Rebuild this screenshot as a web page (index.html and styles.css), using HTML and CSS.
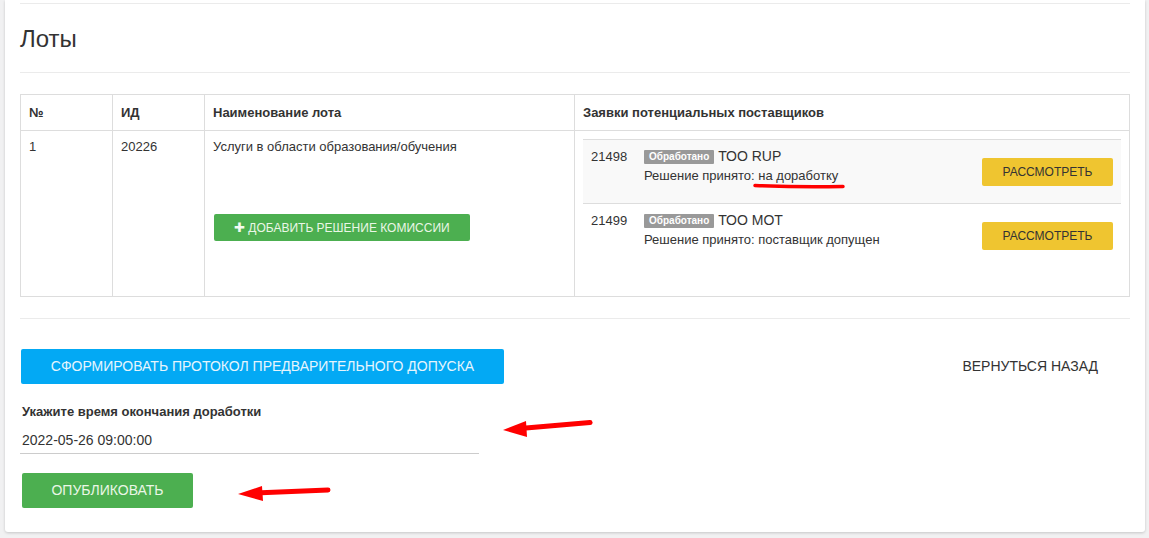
FILE: index.html
```html
<!DOCTYPE html>
<html lang="ru">
<head>
<meta charset="utf-8">
<link rel="stylesheet" href="styles.css">
</head>
<body>
<div class="card">
  <hr class="rule rule-top">
  <h3 class="title">Лоты</h3>
  <hr class="rule rule-title">
  <table class="lots">
    <thead>
      <tr>
        <th class="c-num">№</th>
        <th class="c-id">ИД</th>
        <th class="c-name">Наименование лота</th>
        <th class="c-bids">Заявки потенциальных поставщиков</th>
      </tr>
    </thead>
    <tbody>
      <tr>
        <td>1</td>
        <td>20226</td>
        <td>
          <div class="lot-name">Услуги в области образования/обучения</div>
          <button class="btn btn-green btn-sm"><span class="plus">✚</span>ДОБАВИТЬ РЕШЕНИЕ КОМИССИИ</button>
        </td>
        <td class="bids-cell">
          <table class="bids">
            <tr class="striped">
              <td class="b-id">21498</td>
              <td class="b-info">
                <div><span class="badge">Обработано</span> ТОО RUP</div>
                <div>Решение принято: на доработку</div>
              </td>
              <td class="b-act"><button class="btn btn-yellow">РАССМОТРЕТЬ</button></td>
            </tr>
            <tr>
              <td class="b-id">21499</td>
              <td class="b-info">
                <div><span class="badge">Обработано</span> ТОО МОТ</div>
                <div>Решение принято: поставщик допущен</div>
              </td>
              <td class="b-act"><button class="btn btn-yellow">РАССМОТРЕТЬ</button></td>
            </tr>
          </table>
        </td>
      </tr>
    </tbody>
  </table>
  <hr class="rule rule-bottom">
  <div class="actions">
    <button class="btn btn-blue">СФОРМИРОВАТЬ ПРОТОКОЛ ПРЕДВАРИТЕЛЬНОГО ДОПУСКА</button>
    <a class="back">ВЕРНУТЬСЯ НАЗАД</a>
  </div>
  <div class="field">
    <label class="field-label">Укажите время окончания доработки</label>
    <div class="field-input">2022-05-26 09:00:00</div>
  </div>
  <button class="btn btn-green btn-publish">ОПУБЛИКОВАТЬ</button>
</div>
<svg class="marks" width="1149" height="538" viewBox="0 0 1149 538">
  <path d="M755 185.5 Q800 187.5 843 186.5" stroke="#ff0000" stroke-width="3.5" fill="none" stroke-linecap="round"/>
  <line x1="590" y1="422.5" x2="520" y2="428.5" stroke="#ff0000" stroke-width="5" stroke-linecap="round"/>
  <polygon points="503,430 526,421 527,437" fill="#ff0000"/>
  <line x1="328" y1="490" x2="255" y2="493" stroke="#ff0000" stroke-width="5" stroke-linecap="round"/>
  <polygon points="238,494 262,486 263,501" fill="#ff0000"/>
</svg>
</body>
</html>
```
FILE: styles.css
```css
* { box-sizing: border-box; }
html, body { margin: 0; padding: 0; }
body {
  background: #f1f1f2;
  font-family: "Liberation Sans", Arial, sans-serif;
  font-size: 13px;
  color: #333;
  width: 1149px;
  height: 538px;
  overflow: hidden;
  position: relative;
}
.card {
  margin-left: 5px;
  width: 1140px;
  height: 532px;
  background: #fff;
  padding: 3px 15px 0 15px;
  box-shadow: 0 1px 3px rgba(0,0,0,0.18);
  border-radius: 0 0 3px 3px;
}
.rule { border: 0; border-top: 1px solid #ebebeb; margin: 0; height: 0; }
.title {
  margin: 22px 0 0 0;
  font-size: 24px;
  font-weight: normal;
  line-height: 26px;
  color: #333;
}
.rule-title { margin-top: 20px; }
.lots {
  margin-top: 21px;
  width: 1110px;
  border-collapse: collapse;
  table-layout: fixed;
}
.lots > thead > tr > th,
.lots > tbody > tr > td {
  border: 1px solid #ddd;
  padding: 8px;
  vertical-align: top;
  text-align: left;
}
.lots th { font-weight: bold; line-height: 19px; }
.lots > tbody > tr > td { line-height: 18px; padding-top: 7px; }
.c-num { width: 92px; }
.c-id { width: 92px; }
.c-name { width: 370px; }
.lot-name { margin-bottom: 58px; }
.btn {
  display: inline-block;
  border: 0;
  border-radius: 2px;
  font-family: "Liberation Sans", Arial, sans-serif;
  cursor: pointer;
}
.btn-green { background: #4caf50; color: #eaf6e6; }
.btn-sm {
  height: 27px;
  width: 256px;
  font-size: 12px;
  padding: 0;
  line-height: 27px;
  margin-left: 1px;
}
.plus { font-size: 13px; margin-right: 3px; color: #f4fbf2; }
.lots > tbody > tr > td.bids-cell { padding: 8px 8px 28px 8px; }
.bids { width: 100%; border-collapse: collapse; }
.bids td {
  border-top: 1px solid #ddd;
  padding: 7px 8px 8px 8px;
  vertical-align: top;
  height: 64px;
  line-height: 19px;
  font-size: 13px;
}
.bids tr.striped td { background: #f9f9f9; }
.b-id { width: 53px; }
.bids td.b-act { text-align: right; vertical-align: middle; width: 150px; padding-top: 8px; }
.badge {
  display: inline-block;
  background: #999;
  color: #fff;
  font-size: 10px;
  font-weight: bold;
  line-height: 14px;
  padding: 0 5px;
  border-radius: 1px;
  vertical-align: 1px;
}
.b-info div:first-child { font-size: 14px; }
.btn-yellow {
  background: #efc530;
  color: #333;
  height: 28px;
  width: 131px;
  font-size: 12px;
  padding: 0;
  line-height: 28px;
}
.rule-bottom { margin-top: 21px; }
.actions {
  margin-top: 30px;
  display: flex;
  justify-content: space-between;
  align-items: center;
}
.btn-blue {
  background: #03a9f4;
  color: #e6f5fd;
  height: 35px;
  width: 483px;
  font-size: 14px;
  padding: 0;
  margin-left: 1px;
}
.back {
  font-size: 14px;
  color: #333;
  margin-right: 32px;
  line-height: 20px;
}
.field { margin-top: 19px; padding-left: 2px; }
.field-label {
  display: block;
  font-weight: bold;
  line-height: 18px;
  font-size: 13px;
}
.field-input {
  margin-top: 9px;
  margin-left: -2px;
  width: 459px;
  border-bottom: 1px solid #ccc;
  font-size: 14px;
  line-height: 18px;
  padding: 1px 0 4px 2px;
}
.btn-publish {
  margin-top: 19px;
  margin-left: 2px;
  height: 35px;
  width: 171px;
  font-size: 14px;
  padding: 0;
}
.marks { position: absolute; top: 0; left: 0; pointer-events: none; }
```
